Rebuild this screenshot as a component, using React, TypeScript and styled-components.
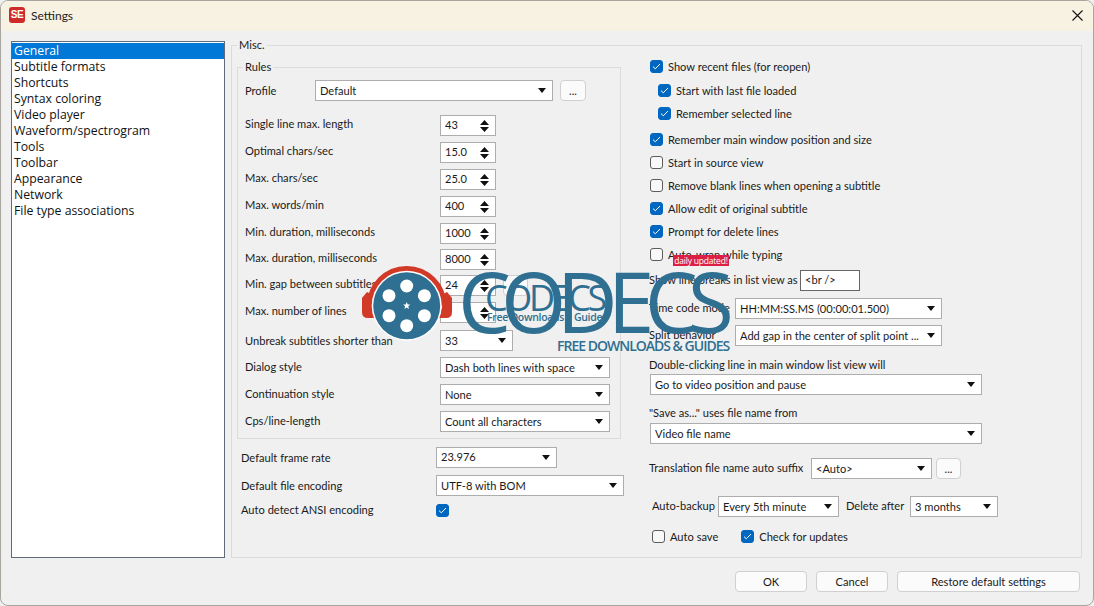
import React from "react";
import styled, { createGlobalStyle } from "styled-components";

const UI = 11.1;

const Global = createGlobalStyle`
  html, body { margin: 0; padding: 0; background: #f0f0f0; }
  body { font-family: Lato, "Open Sans", sans-serif; font-size: ${UI}px; color: #1a1a1a; }
  * { box-sizing: border-box; }
`;

const Window = styled.div`
  position: relative;
  width: 1094px;
  height: 606px;
  background: #f0f0f0;
  border: 1px solid #a8a69f;
  border-radius: 8px;
  overflow: hidden;
  display: flex;
  flex-direction: column;
`;
const TitleBar = styled.div`
  height: 30px;
  flex: none;
  background: #f7f2e2;
  display: flex;
  align-items: center;
  padding: 0 0 2px 8px;
`;
const AppIcon = styled.span`
  width: 16px;
  height: 16px;
  border-radius: 3px;
  background: #cf2a2a;
  color: #fff;
  font: 700 10px/16px "Liberation Sans", sans-serif;
  text-align: center;
  letter-spacing: -0.5px;
`;
const TitleText = styled.span`
  margin-left: 6px;
  font-size: 12px;
  color: #222;
`;
const CloseBtn = styled.svg`
  margin-left: auto;
  margin-right: 10px;
  width: 11px;
  height: 11px;
`;
const Main = styled.div`
  display: flex;
  align-items: flex-start;
  padding-left: 10px;
  height: 527px;
  padding-top: 7px;
`;
const ListBox = styled.ul`
  list-style: none;
  margin: 3px 6px 0 0;
  padding: 1px 0 0;
  width: 214px;
  height: 517px;
  flex: none;
  background: #fff;
  border: 1px solid #5f6b78;
  font-family: "Open Sans", sans-serif;
`;
const ListItem = styled.li<{ $sel?: boolean }>`
  height: 16px;
  line-height: 16px;
  padding-left: 2px;
  font-size: 12.25px;
  background: ${(p) => (p.$sel ? "#0078d7" : "transparent")};
  color: ${(p) => (p.$sel ? "#fff" : "#111")};
`;
const MiscGroup = styled.fieldset`
  margin: 0;
  padding: 0 0 0 5px;
  width: 851px;
  height: 520px;
  border: 1px solid #dcdcdc;
  display: flex;
  flex: none;
  min-width: 0;
`;
const Legend = styled.legend<{ $ml: number }>`
  margin-left: ${(p) => p.$ml}px;
  padding: 0 2px;
  height: 14px;
  line-height: 14px;
`;
const Columns = styled.div`
  display: flex;
  align-items: flex-start;
`;
const LeftCol = styled.div`
  width: 384px;
  margin-top: 8px;
  flex: none;
`;
const RightCol = styled.div`
  margin-left: 28px;
  width: 420px;
  margin-top: 8px;
  display: flex;
  flex-direction: column;
`;
const RulesGroup = styled.fieldset`
  margin: 0;
  padding: 0 0 6px 7px;
  width: 384px;
  border: 1px solid #dcdcdc;
  min-width: 0;
`;
const Row = styled.div<{ $mt?: number; $ml?: number }>`
  display: flex;
  align-items: center;
  min-height: 21px;
  margin-top: ${(p) => p.$mt ?? 0}px;
  margin-left: ${(p) => p.$ml ?? 0}px;
`;
const Label = styled.span<{ $w?: number; $ml?: number; $pb?: number }>`
  ${(p) => (p.$w ? `width: ${p.$w}px; flex: none;` : "")}
  margin-left: ${(p) => p.$ml ?? 0}px;
  padding-bottom: ${(p) => p.$pb ?? 2}px;
  white-space: nowrap;
`;
const Plain = styled.div<{ $mt: number }>`
  margin-top: ${(p) => p.$mt}px;
  height: 14px;
  line-height: 14px;
  white-space: nowrap;
`;
const Control = styled.div<{ $w: number; $ml?: number }>`
  width: ${(p) => p.$w}px;
  height: 21px;
  flex: none;
  margin-left: ${(p) => p.$ml ?? 0}px;
  background: #fff;
  border: 1px solid #adadad;
  display: flex;
  align-items: center;
  padding: 0 6px 0 4px;
  white-space: nowrap;
  overflow: hidden;
`;
const ValueText = styled.span<{ $up?: number }>`
  flex: 1;
  overflow: hidden;
  padding-bottom: ${(p) => p.$up ?? 0}px;
`;
const Caret = styled.svg`
  width: 8px;
  height: 5px;
  flex: none;
`;
const Spin = styled.svg`
  width: 9px;
  height: 12px;
  flex: none;
`;
const LineInput = styled(Control)`
  border-color: #666;
`;
const Button = styled.div<{ $w: number; $ml?: number }>`
  width: ${(p) => p.$w}px;
  height: 21px;
  flex: none;
  margin-left: ${(p) => p.$ml ?? 0}px;
  background: #fbfbfb;
  border: 1px solid #d0d0d0;
  border-radius: 4px;
  display: flex;
  align-items: center;
  justify-content: center;
`;
const CheckRow = styled.div<{ $mt: number; $ml?: number }>`
  display: flex;
  align-items: center;
  height: 13px;
  margin-top: ${(p) => p.$mt}px;
  margin-left: ${(p) => p.$ml ?? 0}px;
`;
const Box = styled.span<{ $on?: boolean }>`
  width: 13px;
  height: 13px;
  flex: none;
  border-radius: 3px;
  background: ${(p) => (p.$on ? "#0067c0" : "#f8f8f8")};
  border: 1px solid ${(p) => (p.$on ? "#0067c0" : "#5c5c5c")};
  display: flex;
  align-items: center;
  justify-content: center;
`;
const CheckText = styled.span`
  margin-left: 5px;
  white-space: nowrap;
`;
const Footer = styled.div`
  display: flex;
  justify-content: flex-end;
  padding: 13px 13px 0 0;
  gap: 9px;
`;
const Overlay = styled.div`
  position: absolute;
  left: -1px;
  top: -1px;
  width: 1094px;
  height: 606px;
  pointer-events: none;
`;
const Reel = styled.svg`
  position: absolute;
  left: 360px;
  top: 262px;
`;
const BigWord = styled.span`
  position: absolute;
  left: 458px;
  top: 241px;
  font: 500 84px/120px "Open Sans", sans-serif;
  letter-spacing: -9.8px;
  color: #2f6f91;
`;
const SmallWord = styled.span`
  position: absolute;
  left: 485px;
  top: 274px;
  font: 400 36px/48px "Open Sans", sans-serif;
  letter-spacing: -3.4px;
  color: #2f6f91;
`;
const GhostLine = styled.span`
  position: absolute;
  left: 487px;
  top: 310px;
  width: 120px;
  display: flex;
  justify-content: space-between;
  font: 600 10.5px/14px "Open Sans", sans-serif;
  letter-spacing: -0.3px;
  color: #2f6f91;
`;
const Tagline = styled.span`
  position: absolute;
  left: 557px;
  top: 337px;
  font: 600 14px/18px "Open Sans", sans-serif;
  letter-spacing: -1px;
  white-space: nowrap;
  color: #2f6f91;
`;
const Badge = styled.span`
  position: absolute;
  left: 673px;
  top: 255px;
  width: 56px;
  height: 11px;
  background: #dc1f44;
  color: #fff;
  font: 400 8.5px/11px "Open Sans", sans-serif;
  letter-spacing: -0.2px;
  text-align: center;
  white-space: nowrap;
`;

const Select = ({ w, ml, up, children }: { w: number; ml?: number; up?: number; children: React.ReactNode }) => (
  <Control $w={w} $ml={ml}>
    <ValueText $up={up}>{children}</ValueText>
    <Caret viewBox="0 0 8 5"><path d="M0 0h8L4 5z" fill="#111" /></Caret>
  </Control>
);
const Spinner = ({ value }: { value: string }) => (
  <Control $w={56}>
    <ValueText $up={2}>{value}</ValueText>
    <Spin viewBox="0 0 9 12"><path d="M4.5 0L9 5H0zM0 7h9l-4.5 5z" fill="#111" /></Spin>
  </Control>
);
const Tick = () => (
  <svg width="9" height="7" viewBox="0 0 9 7"><path d="M1 3.6l2.3 2.2L8 1" fill="none" stroke="#fff" strokeWidth="1" /></svg>
);
const Check = ({ on, mt, ml, children }: { on?: boolean; mt: number; ml?: number; children: React.ReactNode }) => (
  <CheckRow $mt={mt} $ml={ml}>
    <Box $on={on}>{on && <Tick />}</Box>
    <CheckText>{children}</CheckText>
  </CheckRow>
);

const categories = ["General", "Subtitle formats", "Shortcuts", "Syntax coloring", "Video player", "Waveform/spectrogram", "Tools", "Toolbar", "Appearance", "Network", "File type associations"];
const spinners: [string, string, number][] = [
  ["Single line max. length", "43", 14],
  ["Optimal chars/sec", "15.0", 6],
  ["Max. chars/sec", "25.0", 6],
  ["Max. words/min", "400", 6],
  ["Min. duration, milliseconds", "1000", 6],
  ["Max. duration, milliseconds", "8000", 5],
  ["Min. gap between subtitles in ms", "24", 5],
  ["Max. number of lines", "2", 6],
];
const combos: [string, string, number, number][] = [
  ["Unbreak subtitles shorter than", "33", 73, 7],
  ["Dialog style", "Dash both lines with space", 170, 6],
  ["Continuation style", "None", 170, 6],
  ["Cps/line-length", "Count all characters", 170, 6],
];

export default function App() {
  return (
    <Window>
      <Global />
      <TitleBar>
        <AppIcon>SE</AppIcon>
        <TitleText>Settings</TitleText>
        <CloseBtn viewBox="0 0 11 11"><path d="M.5.5l10 10M10.5.5l-10 10" stroke="#111" strokeWidth="1.1" /></CloseBtn>
      </TitleBar>
      <Main>
        <ListBox>
          {categories.map((c, i) => <ListItem key={c} $sel={i === 0}>{c}</ListItem>)}
        </ListBox>
        <MiscGroup>
          <Legend $ml={0}>Misc.</Legend>
          <Columns>
            <LeftCol>
              <RulesGroup>
                <Legend $ml={-2}>Rules</Legend>
                <Row $mt={6}>
                  <Label $w={70} $pb={0}>Profile</Label>
                  <Select w={238}>Default</Select>
                  <Button $w={26} $ml={7}>...</Button>
                </Row>
                {spinners.map(([l, v, mt], i) => (
                  <Row key={l} $mt={mt}>
                    <Label $w={195} $pb={4}>{l}</Label>
                    <Spinner value={v} />
                    {i === 6 && <Button $w={25} $ml={7} />}
                  </Row>
                ))}
                {combos.map(([l, v, w, mt], i) => (
                  <Row key={l} $mt={mt}>
                    <Label $w={195} $pb={i === 0 ? 0 : 2}>{l}</Label>
                    <Select w={w}>{v}</Select>
                  </Row>
                ))}
              </RulesGroup>
              <Row $mt={8} $ml={4}>
                <Label $w={195} $pb={0}>Default frame rate</Label>
                <Select w={121} up={3}>23.976</Select>
              </Row>
              <Row $mt={7} $ml={4}>
                <Label $w={195} $pb={1}>Default file encoding</Label>
                <Select w={188}>UTF-8 with BOM</Select>
              </Row>
              <CheckRow $mt={8} $ml={4}>
                <Label $w={195}>Auto detect ANSI encoding</Label>
                <Box $on><Tick /></Box>
              </CheckRow>
            </LeftCol>
            <RightCol>
              <Check on mt={0} ml={1}>Show recent files (for reopen)</Check>
              <Check on mt={11} ml={9}>Start with last file loaded</Check>
              <Check on mt={10} ml={9}>Remember selected line</Check>
              <Check on mt={13} ml={1}>Remember main window position and size</Check>
              <Check mt={10} ml={1}>Start in source view</Check>
              <Check mt={10} ml={1}>Remove blank lines when opening a subtitle</Check>
              <Check on mt={10} ml={1}>Allow edit of original subtitle</Check>
              <Check on mt={10} ml={1}>Prompt for delete lines</Check>
              <Check mt={10} ml={1}>Auto-wrap while typing</Check>
              <Row $mt={9}>
                <Label $w={151}>Show line breaks in list view as</Label>
                <LineInput $w={60}><ValueText $up={2}>{"<br />"}</ValueText></LineInput>
              </Row>
              <Row $mt={7}>
                <Label $w={86}>Time code mode</Label>
                <Select w={207}>HH:MM:SS.MS (00:00:01.500)</Select>
              </Row>
              <Row $mt={6}>
                <Label $w={86}>Split behavior</Label>
                <Select w={207}>Add gap in the center of split point ...</Select>
              </Row>
              <Plain $mt={12}>Double-clicking line in main window list view will</Plain>
              <Row $mt={2} $ml={1}>
                <Select w={332}>Go to video position and pause</Select>
              </Row>
              <Plain $mt={11}>"Save as..." uses file name from</Plain>
              <Row $mt={3} $ml={1}>
                <Select w={332}>Video file name</Select>
              </Row>
              <Row $mt={14}>
                <Label $w={162}>Translation file name auto suffix</Label>
                <Select w={121}>{"<Auto>"}</Select>
                <Button $w={25} $ml={4}>...</Button>
              </Row>
              <Row $mt={17} $ml={3}>
                <Label $w={66}>Auto-backup</Label>
                <Select w={121}>Every 5th minute</Select>
                <Label $w={64} $ml={7}>Delete after</Label>
                <Select w={88}>3 months</Select>
              </Row>
              <Columns>
                <Check mt={13} ml={3}>Auto save</Check>
                <Check on mt={13} ml={23}>Check for updates</Check>
              </Columns>
            </RightCol>
          </Columns>
        </MiscGroup>
      </Main>
      <Footer>
        <Button $w={72}>OK</Button>
        <Button $w={72}>Cancel</Button>
        <Button $w={183}>Restore default settings</Button>
      </Footer>
      <Overlay>
        <Reel width="100" height="90" viewBox="0 0 100 90">
          <path d="M9.7 43.7A37 37 0 0 1 83.7 43.7" fill="none" stroke="#d13a26" strokeWidth="5.5" />
          <path d="M7 30L2 36V50Q2 56 8 56H16Q10 44 11 32z" fill="#d13a26" />
          <path d="M87 30L92 36V50Q92 56 86 56H78Q84 44 83 32z" fill="#d13a26" />
          <circle cx="46.7" cy="43.7" r="35" fill="#fff" />
          <circle cx="46.7" cy="43.7" r="33.5" fill="#2f6f91" />
          <g fill="#fff">
            <circle cx="46.7" cy="24" r="6.5" />
            <circle cx="29" cy="33.7" r="6.5" />
            <circle cx="64.4" cy="33.7" r="6.5" />
            <circle cx="29" cy="53.7" r="6.5" />
            <circle cx="64.4" cy="53.7" r="6.5" />
            <circle cx="46.7" cy="63.7" r="6.5" />
            <path d="M46.7 40l1 2.4 2.6.2-2 1.7.6 2.6-2.2-1.4-2.2 1.4.6-2.6-2-1.7 2.6-.2z" />
          </g>
        </Reel>
        <SmallWord>CODECS</SmallWord>
        <GhostLine><span>Free Downloads</span><span>Guides</span></GhostLine>
        <BigWord>CODECS</BigWord>
        <Tagline>FREE DOWNLOADS &amp; GUIDES</Tagline>
        <Badge>daily updated!</Badge>
      </Overlay>
    </Window>
  );
}
